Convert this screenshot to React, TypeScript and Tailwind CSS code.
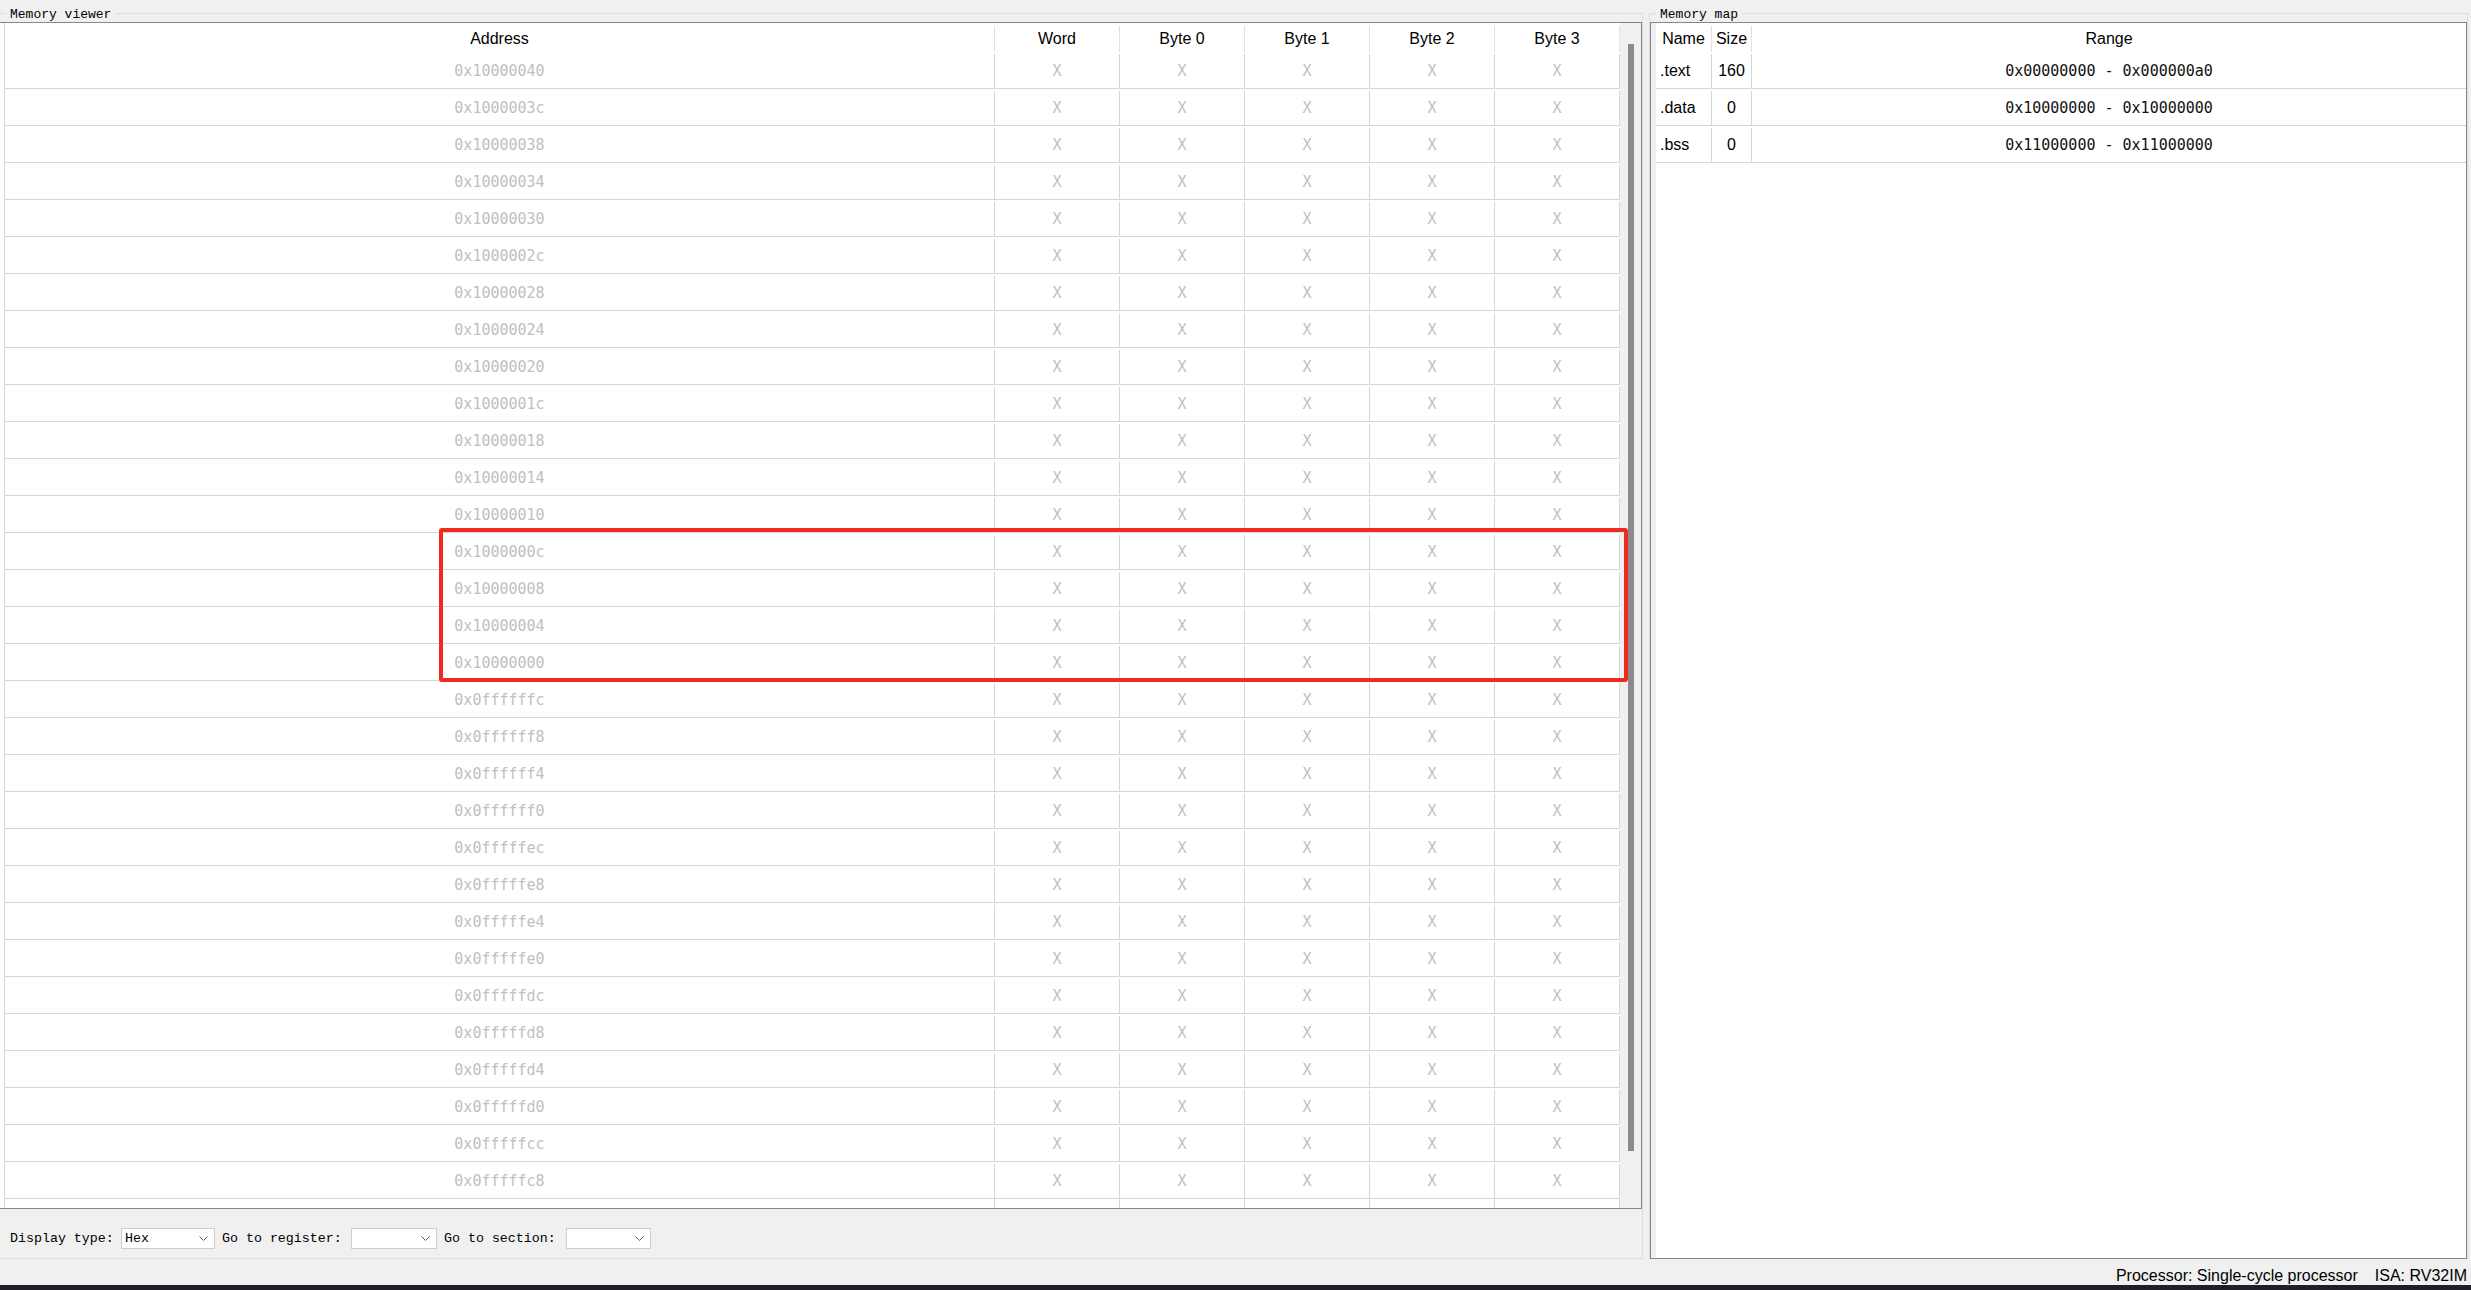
import type { ReactNode } from "react";

const SANS = "font-['Liberation_Sans',Arial,sans-serif]";
const DATA_MONO = "font-['DejaVu_Sans_Mono',monospace]";
const UI_MONO = "font-['Liberation_Mono','Courier_New',monospace]";

// 31 full rows; the one below them is cut by the frame and shows no text
const addresses = Array.from({ length: 31 }, (_, i) =>
  "0x" + ((0x10000040 - 4 * i) >>> 0).toString(16).padStart(8, "0")
);

const sections = [
  { name: ".text", size: "160", range: "0x00000000 - 0x000000a0" },
  { name: ".data", size: "0", range: "0x10000000 - 0x10000000" },
  { name: ".bss", size: "0", range: "0x11000000 - 0x11000000" },
];

function GroupTitle({ children }: { children: ReactNode }) {
  return (
    <span
      className={`absolute -top-[6px] left-[6px] h-[13px] bg-[#f0f0f0] px-[4px] text-[13px] leading-[13px] text-black ${UI_MONO}`}
    >
      {children}
    </span>
  );
}

function Combo({ value, width }: { value?: string; width: string }) {
  return (
    <div
      className={`flex h-[21px] items-center justify-between border border-[#cdcdcd] bg-white pl-[3px] pr-[6px] ${width}`}
    >
      <span className={`text-[13.3px] leading-none text-black ${UI_MONO}`}>{value}</span>
      <svg width="9" height="5" viewBox="0 0 9 5">
        <polyline points="0.5,0.5 4.5,4.5 8.5,0.5" fill="none" stroke="#606060" strokeWidth="1" />
      </svg>
    </div>
  );
}

function MemoryViewer() {
  const byteCell = "flex w-[125px] items-center justify-center border-r border-[#d6d6d6]";
  const headCell = "flex w-[125px] items-center justify-center border-r border-[#e2e2e2]";
  return (
    <div className="relative flex w-[1643px] flex-col border-t border-r border-b border-[#dcdcdc]">
      <GroupTitle>Memory viewer</GroupTitle>

      <div className="mt-[8px] flex h-[1187px] border-t border-r border-b border-[#868686]">
        <div className="w-[4px] bg-white" />
        <div className="flex w-[1616px] flex-col overflow-hidden border-l border-[#d6d6d6] bg-white">
          <div className="flex h-[29px] shrink-0 pt-[3px] text-black">
            <div className="flex w-[990px] items-center justify-center border-r border-[#e2e2e2]">Address</div>
            <div className={headCell}>Word</div>
            <div className={headCell}>Byte 0</div>
            <div className={headCell}>Byte 1</div>
            <div className={headCell}>Byte 2</div>
            <div className={headCell}>Byte 3</div>
          </div>
          {addresses.map((addr) => (
            <div
              key={addr}
              className={`flex h-[37px] shrink-0 border-b border-[#d6d6d6] pt-[2px] text-[15px] text-[#c0c0c0] ${DATA_MONO}`}
            >
              <div className="flex w-[990px] items-center justify-center border-r border-[#d6d6d6]">{addr}</div>
              <div className={byteCell}>X</div>
              <div className={byteCell}>X</div>
              <div className={byteCell}>X</div>
              <div className={byteCell}>X</div>
              <div className={byteCell}>X</div>
            </div>
          ))}
          <div className="flex h-[37px] shrink-0">
            <div className="w-[990px] border-r border-[#d6d6d6]" />
            <div className="w-[125px] border-r border-[#d6d6d6]" />
            <div className="w-[125px] border-r border-[#d6d6d6]" />
            <div className="w-[125px] border-r border-[#d6d6d6]" />
            <div className="w-[125px] border-r border-[#d6d6d6]" />
            <div className="w-[125px] border-r border-[#d6d6d6]" />
          </div>
        </div>
        <div className="flex w-[21px] flex-col bg-[#f0f0f0] pl-[8px] pt-[21px]">
          <div className="h-[1107px] w-[6px] bg-[#8b8b8b]" />
        </div>
      </div>

      <div className={`flex h-[49px] items-start pl-[10px] pt-[19px] text-[13.3px] text-black ${UI_MONO}`}>
        <span className="flex h-[21px] w-[111px] items-center">Display type:</span>
        <Combo value="Hex" width="w-[94px]" />
        <span className="ml-[7px] flex h-[21px] w-[129px] items-center">Go to register:</span>
        <Combo width="w-[86px]" />
        <span className="ml-[7px] flex h-[21px] w-[122px] items-center">Go to section:</span>
        <Combo width="w-[85px]" />
      </div>
    </div>
  );
}

function MemoryMap() {
  return (
    <div className="relative ml-[6px] flex w-[819px] flex-col border-t border-l border-r border-[#dcdcdc]">
      <GroupTitle>Memory map</GroupTitle>

      <div className="mt-[8px] flex h-[1237px] border border-[#868686] bg-white">
        <div className="w-[5px] bg-[#f0f0f0]" />
        <div className="flex flex-1 flex-col">
          <div className="flex h-[29px] shrink-0 pt-[3px]">
            <div className="flex w-[56px] items-center justify-center border-r border-[#e2e2e2]">Name</div>
            <div className="flex w-[40px] items-center justify-center border-r border-[#e2e2e2]">Size</div>
            <div className="flex flex-1 items-center justify-center">Range</div>
          </div>
          {sections.map((s) => (
            <div key={s.name} className="flex h-[37px] shrink-0 border-b border-[#d6d6d6] pt-[2px]">
              <div className="flex w-[56px] items-center border-r border-[#d6d6d6] pl-[4px]">{s.name}</div>
              <div className="flex w-[40px] items-center justify-center border-r border-[#d6d6d6]">{s.size}</div>
              <div className={`flex flex-1 items-center justify-center text-[15px] text-[#111] ${DATA_MONO}`}>
                {s.range}
              </div>
            </div>
          ))}
        </div>
      </div>
    </div>
  );
}

export default function App() {
  return (
    <div
      className={`relative flex h-[1290px] w-[2471px] flex-col overflow-hidden bg-[#f0f0f0] text-[16px] text-black ${SANS}`}
    >
      <div className="flex h-[1259px] shrink-0 pt-[13px]">
        <MemoryViewer />
        <MemoryMap />
      </div>

      <div className="flex h-[26px] shrink-0 items-center justify-end gap-[17px] pr-[4px] pt-[7px]">
        <span>Processor: Single-cycle processor</span>
        <span>ISA: RV32IM</span>
      </div>
      <div className="h-[5px] shrink-0 bg-[#1f1f2b]" />

      {/* highlight drawn over the viewer rows */}
      <div className="pointer-events-none absolute left-[439px] top-[528px] h-[154px] w-[1189px] rounded-[3px] border-4 border-[#f02a1e]" />
    </div>
  );
}
